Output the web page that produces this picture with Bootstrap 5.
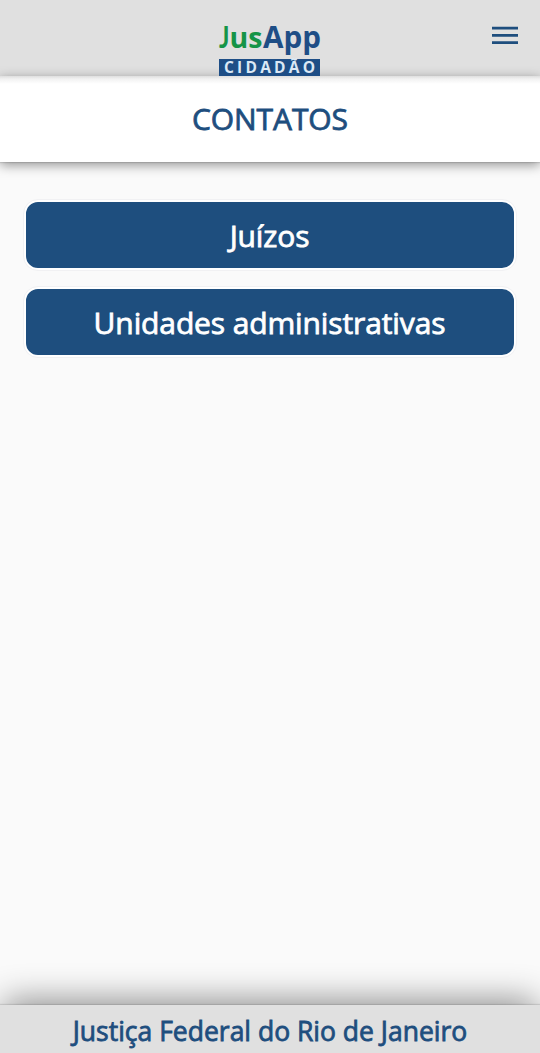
<!DOCTYPE html>
<html lang="pt-BR">
<head>
<meta charset="utf-8">
<meta name="viewport" content="width=device-width, initial-scale=1">
<title>JusApp Cidadão</title>
<link href="https://cdn.jsdelivr.net/npm/bootstrap@5.3.0/dist/css/bootstrap.min.css" rel="stylesheet">
<style>
  :root { --navy: #1e4e7e; }
  body { font-family: "Open Sans", sans-serif; background: #fafafa; color: var(--navy); overflow: hidden; }
  .heavy { -webkit-text-stroke: .8px currentColor; white-space: nowrap; line-height: 1; }
  .topbar { height: 76px; background: #e0e0e0; flex: none; padding: 0 20px; }
  .brand { width: 102px; height: 52px; grid-column: 2; overflow: visible; position: relative; }
  .topgrid { display: grid; grid-template-columns: 1fr 102px 1fr; }
  .menu-btn { margin-top: 21px; width: 30px; height: 28px; }
  .titlebar { height: 86px; flex: none; background: linear-gradient(#dedede, #f2f2f2 3px, #fff 8px); box-shadow: 0 1px 1px rgba(0,0,0,.1), 0 3px 11px rgba(0,0,0,.42); }
  .titlebar h1 { font-size: 30px; letter-spacing: -.1px; }
  .actions { margin-top: 14px; gap: 16.5px; }
  .action { height: 70px; border: 2px solid #fff; border-radius: 14px; background: var(--navy); color: #fff; font-size: 30px; letter-spacing: -.12px; outline: 1px solid #f1f1f3; }
  .action.btn { padding: 2px 1px 0 0; }
  .footbar { height: 48px; padding-top: 5px; background: #e0e0e0; flex: none; font-size: 26.5px; box-shadow: 0 -1px 1px rgba(0,0,0,.1), 0 -8px 34px -4px rgba(0,0,0,.46); }
</style>
</head>
<body class="d-flex flex-column vh-100">
  <header class="topbar topgrid">
    <svg class="brand align-self-end" viewBox="0 0 102 52" role="img" aria-label="JusApp Cidadão">
      <g font-family="Open Sans, sans-serif" font-weight="700">
        <text x="0" y="24" font-family="Lato, sans-serif" font-size="30" textLength="10.5" lengthAdjust="spacingAndGlyphs" fill="#159447">J</text>
        <text x="10.5" y="24" font-size="29" textLength="33" lengthAdjust="spacingAndGlyphs" fill="#159447">us</text>
        <text x="44" y="24" font-size="29.5" textLength="58" lengthAdjust="spacingAndGlyphs" fill="#1e4e86">App</text>
        <rect y="35" width="101" height="17" fill="#1e4e86"/>
        <text x="5" y="49" font-size="15.5" textLength="91" fill="#dbe8f5">CIDADÃO</text>
      </g>
    </svg>
    <button class="menu-btn btn p-0 border-0 ms-auto d-flex" type="button" aria-label="Menu">
      <svg width="30" height="28" viewBox="0 0 30 28" fill="none" stroke="#1e4e7e" stroke-width="2.8"><path d="M2 7.2H28M2 14.4H28M2 21.6H28"/></svg>
    </button>
  </header>
  <div class="titlebar d-flex align-items-center justify-content-center">
    <h1 class="heavy fw-normal mb-0">CONTATOS</h1>
  </div>
  <main class="flex-grow-1 d-flex flex-column px-4 pt-4">
    <div class="actions d-grid">
      <button type="button" class="action heavy btn">Juízos</button>
      <button type="button" class="action heavy btn">Unidades administrativas</button>
    </div>
  </main>
  <footer class="footbar heavy d-flex align-items-center justify-content-center">Justiça Federal do Rio de Janeiro</footer>
<script src="https://cdn.jsdelivr.net/npm/bootstrap@5.3.0/dist/js/bootstrap.bundle.min.js"></script>
</body>
</html>
